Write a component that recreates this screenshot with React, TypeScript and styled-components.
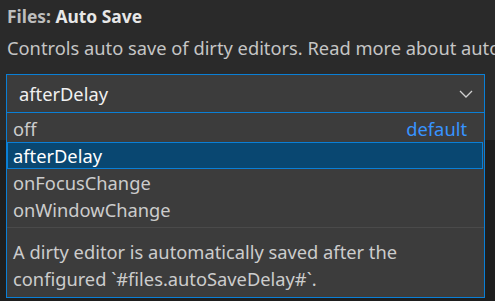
import React from "react";
import styled, { createGlobalStyle } from "styled-components";

const Global = createGlobalStyle`
  html, body { margin: 0; padding: 0; background: #1e1e1e; }
  body { font-family: "Noto Sans", "Open Sans", sans-serif; overflow: hidden; }
`;

const Page = styled.div`
  width: 495px;
  height: 301px;
  background: #1e1e1e;
  position: relative;
  overflow: hidden;
`;

const SettingItem = styled.div`
  background: #2a2a2a;
  height: 140px;
  padding-top: 3px;
  box-sizing: border-box;
`;

const Title = styled.div`
  font-size: 17.4px;
  line-height: 26px;
  font-weight: 700;
  padding-left: 7px;
  white-space: nowrap;
`;

const Category = styled.span`
  color: #bdbdbd;
`;

const Label = styled.span`
  color: #e7e7e7;
`;

const Description = styled.div`
  margin-top: 6px;
  font-size: 18.3px;
  line-height: 26px;
  color: #c5c5c5;
  padding-left: 7px;
  white-space: nowrap;
  overflow: hidden;
`;

const SelectWrap = styled.div`
  position: relative;
  margin: 13px 0 0 6px;
  width: 479px;
`;

const SelectBox = styled.div`
  height: 39px;
  box-sizing: border-box;
  border: 1px solid #0a7fd6;
  background: #3c3c3c;
  display: flex;
  align-items: center;
  justify-content: space-between;
  padding: 0 11px 0 12px;
  color: #f0f0f0;
  font-size: 18.3px;
`;

const Dropdown = styled.div`
  position: absolute;
  top: 100%;
  left: 0;
  right: 0;
  background: #3c3c3c;
  border: 1px solid #0a7fd6;
  border-top: none;
  height: 185px;
  box-sizing: border-box;
  display: flex;
  flex-direction: column;
`;

const OptionList = styled.div`
  padding: 2px 0 4px 0;
  display: flex;
  flex-direction: column;
`;

const Option = styled.div<{ $selected?: boolean }>`
  height: 27px;
  box-sizing: border-box;
  display: flex;
  align-items: center;
  justify-content: space-between;
  padding: 0 15px 0 5px;
  font-size: 18.3px;
  color: ${(p) => (p.$selected ? "#ffffff" : "#cccccc")};
  background: ${(p) => (p.$selected ? "#094771" : "transparent")};
  border: 1px solid ${(p) => (p.$selected ? "#0a7fd6" : "transparent")};
  margin-right: 1px;
`;

const DefaultTag = styled.span`
  color: #3794ff;
`;

const Details = styled.div`
  border-top: 1px solid #4a4a4a;
  padding: 10px 8px 5px 6px;
  font-size: 18.3px;
  line-height: 27px;
  color: #cccccc;
`;

const Chevron = () => (
  <svg width="14" height="8" viewBox="0 0 14 8" fill="none">
    <path d="M1 1l6 6 6-6" stroke="#d0d0d0" strokeWidth="1.3" />
  </svg>
);

export default function App() {
  return (
    <Page>
      <Global />
      <SettingItem>
        <Title>
          <Category>Files: </Category>
          <Label>Auto Save</Label>
        </Title>
        <Description>
          Controls auto save of dirty editors. Read more about autosave here.
        </Description>
        <SelectWrap>
          <SelectBox>
            <span>afterDelay</span>
            <Chevron />
          </SelectBox>
          <Dropdown>
            <OptionList>
              <Option>
                <span>off</span>
                <DefaultTag>default</DefaultTag>
              </Option>
              <Option $selected>
                <span>afterDelay</span>
              </Option>
              <Option>
                <span>onFocusChange</span>
              </Option>
              <Option>
                <span>onWindowChange</span>
              </Option>
            </OptionList>
            <Details>
              A dirty editor is automatically saved after the
              <br />
              configured `#files.autoSaveDelay#`.
            </Details>
          </Dropdown>
        </SelectWrap>
      </SettingItem>
    </Page>
  );
}
